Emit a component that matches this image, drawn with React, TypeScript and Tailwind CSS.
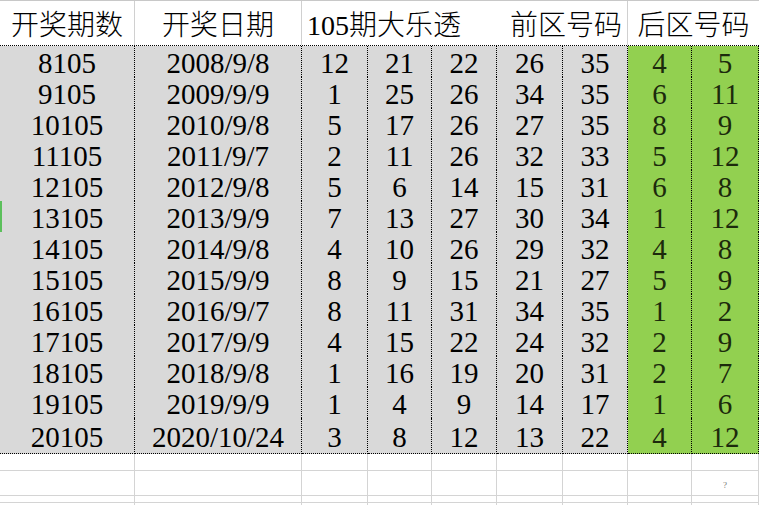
import React from 'react';

const rows: [string, string, number[]][] = [
  ['8105', '2008/9/8', [12, 21, 22, 26, 35, 4, 5]],
  ['9105', '2009/9/9', [1, 25, 26, 34, 35, 6, 11]],
  ['10105', '2010/9/8', [5, 17, 26, 27, 35, 8, 9]],
  ['11105', '2011/9/7', [2, 11, 26, 32, 33, 5, 12]],
  ['12105', '2012/9/8', [5, 6, 14, 15, 31, 6, 8]],
  ['13105', '2013/9/9', [7, 13, 27, 30, 34, 1, 12]],
  ['14105', '2014/9/8', [4, 10, 26, 29, 32, 4, 8]],
  ['15105', '2015/9/9', [8, 9, 15, 21, 27, 5, 9]],
  ['16105', '2016/9/7', [8, 11, 31, 34, 35, 1, 2]],
  ['17105', '2017/9/9', [4, 15, 22, 24, 32, 2, 9]],
  ['18105', '2018/9/8', [1, 16, 19, 20, 31, 2, 7]],
  ['19105', '2019/9/9', [1, 4, 9, 14, 17, 1, 6]],
  ['20105', '2020/10/24', [3, 8, 12, 13, 22, 4, 12]],
];

const cols = 'grid grid-cols-[135px_167px_66px_64px_65px_66px_65px_64px_67px]';
const font = { fontFamily: '"Liberation Serif", "Noto Sans CJK SC", serif' };

function Cell({ children, green, mark, tall }: { children?: React.ReactNode; green?: boolean; mark?: boolean; tall?: boolean }) {
  return (
    <div
      className={`border-r border-b border-dotted border-black ${tall ? 'pt-[5px]' : 'pt-[3px]'} text-center text-[29px] leading-none ${
        green ? 'bg-[#92d050] text-[#1c2a0c]' : 'bg-[#d9d9d9] text-black'
      } ${mark ? 'shadow-[inset_2px_0_0_#5cc05c]' : ''}`}
    >
      {children}
    </div>
  );
}

export default function App() {
  return (
    <div className="w-[759px] h-[505px] overflow-hidden bg-white" style={font}>
      {/* header */}
      <div className="border-t border-[#c8c8c8]">
        <div className={`${cols} h-[45px] border-b border-dotted border-black text-[28px] font-light leading-none text-black`}>
          <div className="pt-[11px] text-center border-r border-solid border-[#d0d0d0]">开奖期数</div>
          <div className="pt-[11px] text-center border-r border-solid border-[#d0d0d0]">开奖日期</div>
          <div className="col-span-5 flex justify-between pt-[11px] px-[5px] border-r border-solid border-[#d0d0d0]">
            <span>105期大乐透</span>
            <span>前区号码</span>
          </div>
          <div className="col-span-2 pt-[11px] text-center">后区号码</div>
        </div>
      </div>

      {/* data */}
      {rows.map(([issue, date, nums], i) => {
        const last = i === rows.length - 1;
        return (
          <div key={issue} className={`${cols} ${last ? 'h-[36px]' : 'h-[31px]'}`}>
            <Cell mark={i === 5} tall={last}>{issue}</Cell>
            <Cell tall={last}>{date}</Cell>
            {nums.map((n, j) => (
              <Cell key={j} green={j >= 5} tall={last}>
                {n}
              </Cell>
            ))}
          </div>
        );
      })}

      {/* empty rows */}
      {[17, 16, 16, 16].map((h, r) => (
        <div key={r} className={`${cols} ${h === 17 ? 'h-[17px]' : 'h-[16px]'}`}>
          {Array.from({ length: 9 }).map((_, c) => (
            <div key={c} className="border-r border-b border-[#d4d4d4] text-center">
              {r === 1 && c === 8 && <span className="text-[9px] leading-[15px] text-[#777]">?</span>}
            </div>
          ))}
        </div>
      ))}
    </div>
  );
}
